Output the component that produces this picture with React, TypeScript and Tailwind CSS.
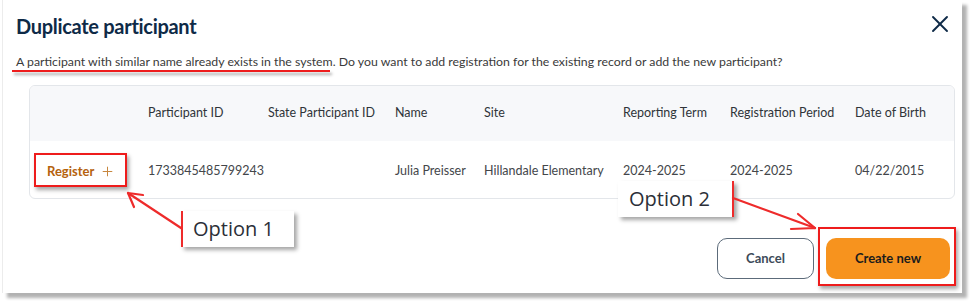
import { X, Plus } from "lucide-react";

const COLS = "grid grid-cols-[118px_120px_127px_89px_139px_107px_125px_1fr] items-center";

const HEADERS = [
  "",
  "Participant ID",
  "State Participant ID",
  "Name",
  "Site",
  "Reporting Term",
  "Registration Period",
  "Date of Birth",
];

const ROW = ["1733845485799243", "", "Julia Preisser", "Hillandale Elementary", "2024-2025", "2024-2025", "04/22/2015"];

const Callout = ({ label, side }: { label: string; side: "left" | "right" }) => (
  <div
    className={`h-[36px] bg-white flex items-center shadow-[3px_3px_4px_rgba(0,0,0,0.35)] text-[20px] text-[#2b2f38] ${
      side === "left" ? "border-l-2 border-[#ee2b2b] pl-[10px] pr-[20px]" : "border-r-2 border-[#ee2b2b] pl-[11px] pr-[22px]"
    }`}
    style={{ fontFamily: '"Open Sans", "Noto Sans", sans-serif' }}
  >
    {label}
  </div>
);

export default function App() {
  return (
    <div className="relative w-[972px] h-[302px] bg-white overflow-hidden" style={{ fontFamily: 'Lato, "Noto Sans", sans-serif' }}>
      <div className="relative ml-[2px] w-[960px] h-[293px] bg-white border-l border-[#ececec] shadow-[5px_5px_3px_rgba(0,0,0,0.3)] pl-[13px] pr-[12px] pt-[10px]">
        {/* Header */}
        <div className="flex items-start justify-between">
          <h1 className="mt-[2px] text-[20px] font-bold text-[#0e2a47] leading-[28px] tracking-[-0.3px]">Duplicate participant</h1>
          <button className="mr-[-4px] text-[#0e2a47]">
            <X className="w-[28px] h-[28px]" strokeWidth={1.6} />
          </button>
        </div>
        <p className="mt-[14px] text-[12.3px] text-[#3a3a3a] leading-[16px]">
          A participant with similar name already exists in the system. Do you want to add registration for the existing record or add the new participant?
        </p>

        {/* Table */}
        <div className="mt-[15px] ml-[13px] mr-[-5px] border border-[#e3e6ea] rounded-[6px] overflow-hidden">
          <div className={`${COLS} h-[55px] bg-[#f7f8fa] text-[12.5px] text-[#2f3439]`}>
            {HEADERS.map((h, i) => (
              <div key={i} className="whitespace-nowrap">{h}</div>
            ))}
          </div>
          <div className={`${COLS} h-[57px] pt-[4px] text-[12.5px] text-[#43464a]`}>
            <div className="pl-[17px] flex items-center gap-[6px] text-[13px] font-bold text-[#b5620d]">
              Register
              <Plus className="w-[15px] h-[15px] text-[#c7873f]" strokeWidth={1.6} />
            </div>
            {ROW.map((c, i) => (
              <div key={i} className="whitespace-nowrap">{c}</div>
            ))}
          </div>
        </div>

        {/* Footer */}
        <div className="flex justify-end gap-[12px] mt-[39px]">
          <button className="w-[97px] h-[41px] rounded-[10px] border border-[#5c6b7a] text-[13px] font-bold text-[#3d4b59]">Cancel</button>
          <button className="w-[124px] h-[41px] rounded-[10px] bg-[#f7931e] text-[13px] font-bold text-[#1c1c1c]">Create new</button>
        </div>
      </div>

      {/* Annotations */}
      <div className="absolute left-[12px] top-[70px] w-[318px] h-[2px] bg-[#ee1c1c] shadow-[2px_3px_3px_rgba(0,0,0,0.35)]" />
      <div className="absolute left-[34px] top-[153px] w-[93px] h-[34px] border-2 border-[#ee1c1c] shadow-[2px_3px_4px_rgba(0,0,0,0.35)]" />
      <div className="absolute left-[818px] top-[227px] w-[138px] h-[59px] border-2 border-[#ee1c1c] shadow-[2px_3px_4px_rgba(0,0,0,0.35)]" />
      <div className="absolute left-[181px] top-[211px]">
        <Callout label="Option 1" side="left" />
      </div>
      <div className="absolute left-[618px] top-[181px]">
        <Callout label="Option 2" side="right" />
      </div>
      <svg className="absolute left-0 top-0 pointer-events-none" width="972" height="302">
        <g stroke="#ee2b2b" strokeWidth="2.2" fill="none" strokeLinecap="round">
          <path d="M181 228 L128 193" />
          <path d="M128 193 L143 195 M128 193 L134 207" />
          <path d="M733 198 L815 228" />
          <path d="M815 228 L798 214 M815 228 L791 229" />
        </g>
      </svg>
    </div>
  );
}
